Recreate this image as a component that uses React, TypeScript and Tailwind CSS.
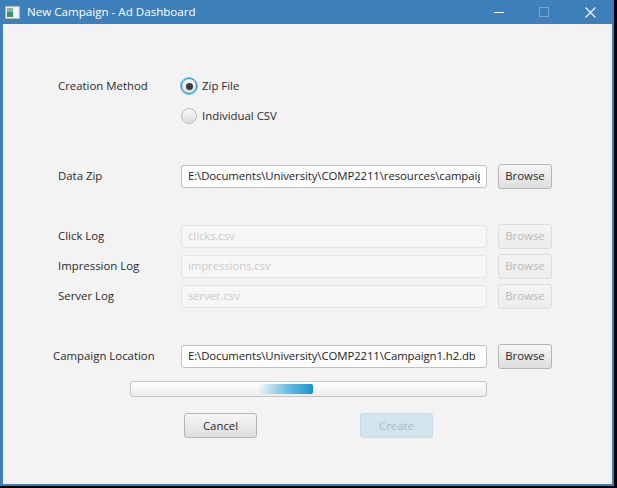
import React from 'react'

const font = 'font-["Segoe_UI","Open_Sans","Noto_Sans",sans-serif]'

const Field = ({ value, disabled }: { value: string; disabled?: boolean }) => (
  <div
    className={`flex h-[23px] w-[306px] items-center rounded-[3px] border px-[6px] ${
      disabled ? 'border-[#e4e4e4] bg-[#f7f7f7] text-[#c9c9c9]' : 'border-[#c2c2c2] bg-white text-[#222]'
    }`}
  >
    <div className="overflow-hidden whitespace-nowrap tracking-[-0.1px]">{value}</div>
  </div>
)

const Button = ({ label, disabled, w = 'w-[54px]' }: { label: string; disabled?: boolean; w?: string }) => (
  <div
    className={`flex h-[25px] ${w} items-center justify-center rounded-[3px] border ${
      disabled
        ? 'border-[#dcdcdc] bg-gradient-to-b from-[#f4f4f4] to-[#ececec] text-[#b9b9b9]'
        : 'border-[#b4b4b4] bg-gradient-to-b from-[#f6f6f6] to-[#dedede] text-[#2a2a2a]'
    }`}
  >
    {label}
  </div>
)

const Radio = ({ checked, label }: { checked?: boolean; label: string }) => (
  <div className="flex h-[24px] items-center">
    <div
      className={`flex h-[16px] w-[16px] items-center justify-center rounded-full border ${
        checked ? 'border-[#0a96d4] ring-1 ring-[#6cbfe5]' : 'border-[#bdbdbd]'
      } bg-gradient-to-b from-[#f8f8f8] to-[#dcdcdc]`}
    >
      {checked && <div className="h-[7px] w-[7px] rounded-full bg-[#3a3a3a]" />}
    </div>
    <span className="ml-[5px] text-[#2a2a2a]">{label}</span>
  </div>
)

const Row = ({ label, children, className = '' }: { label: string; children: React.ReactNode; className?: string }) => (
  <div className={`flex h-[24px] items-center ${className}`}>
    <div className="w-[123px] text-[#2a2a2a]">{label}</div>
    {children}
  </div>
)

export default function App() {
  return (
    <div className={`h-[488px] w-[617px] bg-black ${font} text-[11.4px]`}>
      <div className="flex h-[486px] w-[614px] flex-col bg-[#3c7fbb]">
        {/* title bar */}
        <div className="flex h-[24px] items-center text-white">
          <svg width="15" height="13" viewBox="0 0 15 13" className="ml-[5px]">
            <rect x="0.5" y="0.5" width="14" height="12" fill="#e8e8e8" stroke="#b8b8b8" />
            <rect x="2" y="2" width="6" height="9" fill="#3f8f6a" />
            <rect x="2" y="2" width="6" height="4" fill="#7fb7a8" />
            <rect x="9" y="2" width="4" height="9" fill="#f4f4f4" />
          </svg>
          <span className="ml-[7px] text-[11.6px]">New Campaign - Ad Dashboard</span>
          <div className="ml-auto flex items-center">
            <div className="h-[1px] w-[10px] bg-white" />
            <div className="ml-[35px] h-[10px] w-[10px] border border-white/30" />
            <svg width="11" height="11" viewBox="0 0 11 11" className="ml-[36px] mr-[18px]">
              <path d="M0.5 0.5L10.5 10.5M10.5 0.5L0.5 10.5" stroke="white" strokeWidth="1.1" />
            </svg>
          </div>
        </div>

        {/* content */}
        <div className="mb-[2px] ml-[3px] mr-[2px] flex flex-1 flex-col bg-[#f3f3f3] pl-[55px]">
          <Row label="Creation Method" className="mt-[50px]">
            <Radio checked label="Zip File" />
          </Row>
          <Row label="" className="mt-[6px]">
            <Radio label="Individual CSV" />
          </Row>

          <Row label="Data Zip" className="mt-[36px]">
            <Field value="E:\Documents\University\COMP2211\resources\campaign.zip" />
            <div className="ml-[11px]">
              <Button label="Browse" />
            </div>
          </Row>

          <Row label="Click Log" className="mt-[36px]">
            <Field value="clicks.csv" disabled />
            <div className="ml-[11px]">
              <Button label="Browse" disabled />
            </div>
          </Row>
          <Row label="Impression Log" className="mt-[6px]">
            <Field value="impressions.csv" disabled />
            <div className="ml-[11px]">
              <Button label="Browse" disabled />
            </div>
          </Row>
          <Row label="Server Log" className="mt-[6px]">
            <Field value="server.csv" disabled />
            <div className="ml-[11px]">
              <Button label="Browse" disabled />
            </div>
          </Row>

          <div className="mt-[36px] flex h-[24px] items-center">
            <div className="-ml-[5px] w-[128px] text-[#2a2a2a]">Campaign Location</div>
            <Field value="E:\Documents\University\COMP2211\Campaign1.h2.db" />
            <div className="ml-[11px]">
              <Button label="Browse" />
            </div>
          </div>

          <div className="ml-[72px] mt-[13px] flex h-[16px] w-[357px] items-center rounded-[3px] border border-[#c4c4c4] bg-gradient-to-b from-white to-[#ececec] px-[2px]">
            <div className="ml-[125px] h-[10px] w-[55px] rounded-[2px] bg-gradient-to-r from-white/0 via-[#5ab8de] via-60% to-[#0796cc]" />
          </div>

          <div className="mt-[16px] flex">
            <div className="ml-[126px]">
              <Button label="Cancel" w="w-[73px]" />
            </div>
            <div className="ml-[103px]">
              <div className="flex h-[25px] w-[73px] items-center justify-center rounded-[3px] border border-[#c8dbe6] bg-[#d3e4ee] text-[#a9bcc7]">
                Create
              </div>
            </div>
          </div>
        </div>
      </div>
    </div>
  )
}
